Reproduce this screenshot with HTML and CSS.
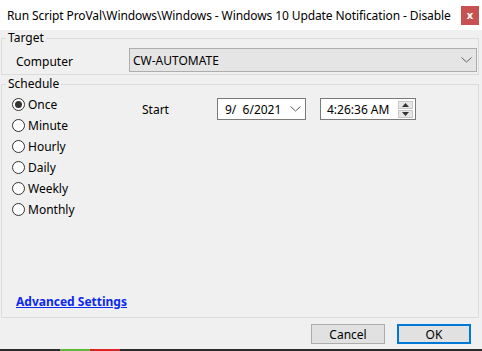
FILE: index.html
```html
<!DOCTYPE html>
<html lang="en">
<head>
  <meta charset="UTF-8" />
  <title>Run Script</title>
  <link rel="stylesheet" href="styles.css">
</head>
<body>

  <div class="window">
    <div class="titlebar">
      <span class="title">Run Script ProVal\Windows\Windows - Windows 10 Update Notification - Disable</span>
      <span class="close">x</span>
    </div>

    <div class="content">
      <fieldset class="group target">
        <legend>Target</legend>
        <div class="row">
          <span class="row-label">Computer</span>
          <div class="combo">
            <span>CW-AUTOMATE</span>
            <svg class="chevron" width="11" height="6" viewBox="0 0 11 6"><path d="M0.5 0.5 L5.5 5 L10.5 0.5" fill="none" stroke="#606060" stroke-width="1"/></svg>
          </div>
        </div>
      </fieldset>

      <fieldset class="group schedule">
        <legend>Schedule</legend>
        <div class="schedule-body">
          <div class="radios">
            <label class="radio checked"><span class="dot"></span>Once</label>
            <label class="radio"><span class="dot"></span>Minute</label>
            <label class="radio"><span class="dot"></span>Hourly</label>
            <label class="radio"><span class="dot"></span>Daily</label>
            <label class="radio"><span class="dot"></span>Weekly</label>
            <label class="radio"><span class="dot"></span>Monthly</label>
          </div>
          <div class="start-row">
            <span class="start-label">Start</span>
            <div class="picker date">
              <span>9/&nbsp;&nbsp;6/2021</span>
              <svg class="chevron" width="11" height="6" viewBox="0 0 11 6"><path d="M0.5 0.5 L5.5 5 L10.5 0.5" fill="none" stroke="#606060" stroke-width="1"/></svg>
            </div>
            <div class="picker time">
              <span>4:26:36 AM</span>
              <div class="spin">
                <span class="spin-btn"><svg width="7" height="4" viewBox="0 0 7 4"><path d="M3.5 0 L7 4 L0 4 Z" fill="#333"/></svg></span>
                <span class="spin-btn"><svg width="7" height="4" viewBox="0 0 7 4"><path d="M0 0 L7 0 L3.5 4 Z" fill="#333"/></svg></span>
              </div>
            </div>
          </div>
        </div>
        <a class="advanced" href="#">Advanced Settings</a>
      </fieldset>

      <div class="buttons">
        <button class="btn">Cancel</button>
        <button class="btn primary">OK</button>
      </div>
    </div>

    <div class="taskbar">
      <span class="seg green"></span>
      <span class="seg red"></span>
    </div>
  </div>

</body>
</html>
```

FILE: styles.css
```css
body {
  margin: 0;
  background: #f0f0f0;
  font-family: "Noto Sans", "Liberation Sans", sans-serif;
  font-size: 12px;
  color: #000;
}

.window {
  width: 482px;
  height: 351px;
  display: flex;
  flex-direction: column;
  overflow: hidden;
}

.titlebar {
  height: 30px;
  flex-shrink: 0;
  background: #fff;
  display: flex;
  align-items: center;
  justify-content: space-between;
  padding: 0 3px 0 7px;
}

.title {
  font-size: 12px;
  white-space: nowrap;
  letter-spacing: -0.1px;
}

.close {
  width: 18px;
  height: 19px;
  background: #c75050;
  color: #fff;
  font-size: 11px;
  font-weight: bold;
  display: flex;
  align-items: center;
  justify-content: center;
  padding-bottom: 2px;
  box-sizing: border-box;
}

.content {
  flex: 1;
  display: flex;
  flex-direction: column;
  padding: 0 3px 0 1px;
}

.group {
  margin: 0;
  border: 1px solid #dcdcdc;
  padding: 0;
  min-width: 0;
}

.group legend {
  margin-left: 4px;
  padding: 0 2px;
  line-height: 16px;
}

.target {
  padding: 2px 0 2px 0;
}

.row {
  display: flex;
  align-items: center;
  height: 24px;
}

.row-label {
  width: 113px;
  padding-left: 14px;
  padding-top: 2px;
}

.combo {
  flex: 1;
  height: 24px;
  box-sizing: border-box;
  background: #e5e5e5;
  border: 1px solid #adadad;
  display: flex;
  align-items: center;
  justify-content: space-between;
  padding: 0 4px 0 3px;
  margin-right: 1px;
}

.schedule {
  margin-top: 1px;
  height: 242px;
  box-sizing: border-box;
}

.schedule-body {
  display: flex;
  height: 201px;
  box-sizing: border-box;
  padding-top: 2px;
}

.radios {
  display: flex;
  flex-direction: column;
  width: 130px;
  padding-left: 10px;
}

.radio {
  height: 21px;
  display: flex;
  align-items: center;
  gap: 3px;
}

.dot {
  width: 13px;
  height: 13px;
  box-sizing: border-box;
  border: 1px solid #333;
  border-radius: 50%;
  background: #fff;
  display: flex;
  align-items: center;
  justify-content: center;
}

.radio.checked .dot::after {
  content: "";
  width: 7px;
  height: 7px;
  border-radius: 50%;
  background: #333;
}

.start-row {
  display: flex;
  align-items: center;
  height: 22px;
  margin-top: 4px;
}

.start-label {
  width: 75px;
}

.picker {
  height: 22px;
  box-sizing: border-box;
  background: #fff;
  border: 1px solid #7a7a7a;
  display: flex;
  align-items: center;
  justify-content: space-between;
}

.picker.date {
  width: 89px;
  padding: 0 4px 0 7px;
}

.picker.time {
  width: 96px;
  margin-left: 14px;
  padding: 0 2px 0 6px;
}

.spin {
  display: flex;
  flex-direction: column;
  gap: 1px;
}

.spin-btn {
  width: 15px;
  height: 8px;
  background: #e6e6e6;
  border: 1px solid #c8c8c8;
  box-sizing: border-box;
  display: flex;
  align-items: center;
  justify-content: center;
}

.advanced {
  display: inline-block;
  margin-left: 14px;
  color: #0a28f0;
  font-weight: bold;
  text-decoration: underline;
}

.buttons {
  display: flex;
  justify-content: flex-end;
  gap: 12px;
  padding: 6px 8px 0 0;
}

.btn {
  width: 74px;
  height: 20px;
  background: #e1e1e1;
  border: 1px solid #adadad;
  font-family: inherit;
  font-size: 12px;
  padding: 0;
  color: #000;
}

.btn.primary {
  border: 2px solid #0078d7;
}

.taskbar {
  height: 2px;
  background: #2b2b2b;
  display: flex;
  margin-top: auto;
}

.seg {
  width: 30px;
}

.seg.green {
  margin-left: 60px;
  background: #5fb832;
}

.seg.red {
  background: #d22;
}
```
